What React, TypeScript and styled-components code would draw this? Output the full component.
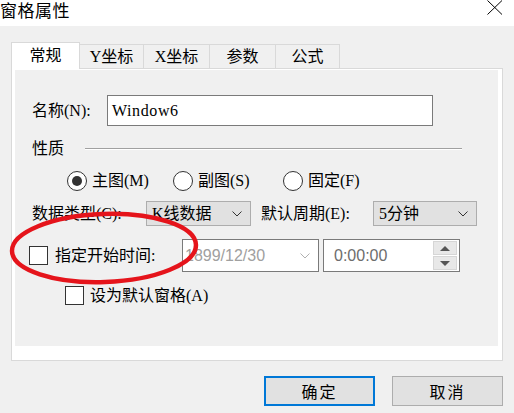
import React from 'react';
import styled, { createGlobalStyle } from 'styled-components';

const GlobalStyle = createGlobalStyle`
  html, body {
    margin: 0;
    padding: 0;
    background: #f0f0f0;
  }
  body {
    width: 514px;
    height: 413px;
    overflow: hidden;
    font-family: "Liberation Serif", "Noto Sans CJK SC", serif;
    font-size: 16px;
    color: #000;
  }
`;

const Dialog = styled.div`
  position: relative;
  width: 514px;
  height: 413px;
  background: #f0f0f0;
`;

const TitleBar = styled.div`
  height: 26px;
  background: #fff;
  display: flex;
  justify-content: space-between;
  align-items: flex-start;
`;

const Title = styled.div`
  font-family: "Noto Sans CJK SC", sans-serif;
  font-size: 17px;
  line-height: 20px;
  letter-spacing: 0.5px;
`;

const CloseBtn = styled.div`
  width: 27px;
  height: 16px;
  display: flex;
  justify-content: flex-start;
`;

const Body = styled.div`
  padding: 16px 11px 0 11px;
`;

const TabStrip = styled.div`
  display: flex;
  align-items: flex-end;
  height: 26px;
`;

const Tab = styled.div<{ $active?: boolean; $w: number }>`
  position: relative;
  z-index: ${(p) => (p.$active ? 1 : 0)};
  box-sizing: border-box;
  width: ${(p) => p.$w}px;
  height: ${(p) => (p.$active ? 27 : 24)}px;
  margin-bottom: ${(p) => (p.$active ? -1 : 0)}px;
  margin-left: ${(p) => (p.$active ? 0 : -1)}px;
  border: 1px solid #d9d9d9;
  border-bottom: none;
  background: ${(p) => (p.$active ? '#fff' : '#f0f0f0')};
  display: flex;
  align-items: center;
  justify-content: center;
  font-size: 16px;
  line-height: 20px;
  padding-top: ${(p) => (p.$active ? 0 : 1)}px;
`;

const Panel = styled.div`
  box-sizing: border-box;
  width: 492px;
  height: 293px;
  border: 1px solid #d9d9d9;
  background: #fff;
  padding: 1px 4px 14px 3px;
`;

const Page = styled.div`
  height: 100%;
  background: #f0f0f0;
  display: flex;
  flex-direction: column;
  padding-left: 17px;
`;

const Row = styled.div<{ $mt: number; $h: number; $ml?: number }>`
  display: flex;
  align-items: center;
  margin-top: ${(p) => p.$mt}px;
  margin-left: ${(p) => p.$ml ?? 0}px;
  height: ${(p) => p.$h}px;
  line-height: 18px;
  white-space: nowrap;
`;

const Label = styled.span<{ $w?: number; $ml?: number }>`
  display: inline-block;
  width: ${(p) => (p.$w ? `${p.$w}px` : 'auto')};
  margin-left: ${(p) => p.$ml ?? 0}px;
  flex-shrink: 0;
`;

const TextInput = styled.div`
  box-sizing: border-box;
  width: 326px;
  height: 31px;
  border: 1px solid #7a7a7a;
  background: #fff;
  padding: 0 4px;
  display: flex;
  align-items: center;
  font-family: "Liberation Serif", serif;
  font-size: 16px;
  letter-spacing: 0.6px;
`;

const Separator = styled.div`
  width: 377px;
  height: 1px;
  background: #a0a0a0;
  border-bottom: 1px solid #fff;
  margin-left: 21px;
`;

const RadioItem = styled.label<{ $w: number }>`
  display: flex;
  align-items: center;
  width: ${(p) => p.$w}px;
  gap: 5px;
`;

const RadioCircle = styled.span<{ $on?: boolean }>`
  box-sizing: border-box;
  width: 20px;
  height: 20px;
  border-radius: 50%;
  border: 1px solid #333;
  background: #fff;
  display: flex;
  align-items: center;
  justify-content: center;
  &::after {
    content: '';
    display: ${(p) => (p.$on ? 'block' : 'none')};
    width: 10px;
    height: 10px;
    border-radius: 50%;
    background: #333;
  }
`;

const Select = styled.div<{ $w: number }>`
  box-sizing: border-box;
  width: ${(p) => p.$w}px;
  height: 25px;
  border: 1px solid #adadad;
  background: #e1e1e1;
  display: flex;
  align-items: center;
  justify-content: space-between;
  padding: 0 8px 0 5px;
`;

const CheckBox = styled.span`
  box-sizing: border-box;
  display: inline-block;
  width: 19px;
  height: 19px;
  border: 1px solid #333;
  background: #fff;
  flex-shrink: 0;
`;

const FieldBox = styled.div<{ $w: number; $ml?: number }>`
  box-sizing: border-box;
  width: ${(p) => p.$w}px;
  height: 33px;
  margin-left: ${(p) => p.$ml ?? 0}px;
  border: 1px solid #7a7a7a;
  background: #fff;
  display: flex;
  align-items: center;
  justify-content: space-between;
  font-family: "Liberation Sans", sans-serif;
  font-size: 16px;
`;

const FieldText = styled.span<{ $color: string; $pl: number }>`
  color: ${(p) => p.$color};
  padding-left: ${(p) => p.$pl}px;
`;

const Spinner = styled.div`
  display: flex;
  flex-direction: column;
  gap: 1px;
  margin-right: 2px;
`;

const SpinBtn = styled.div`
  box-sizing: border-box;
  width: 24px;
  height: 14px;
  background: #e8e8e8;
  border: 1px solid #d6d6d6;
  display: flex;
  align-items: center;
  justify-content: center;
`;

const ButtonRow = styled.div`
  display: flex;
  justify-content: flex-end;
  gap: 17px;
  margin-top: 15px;
`;

const Button = styled.div<{ $primary?: boolean }>`
  box-sizing: border-box;
  width: 111px;
  height: 30px;
  background: #e1e1e1;
  border: ${(p) => (p.$primary ? '2px solid #0078d7' : '1px solid #adadad')};
  display: flex;
  align-items: center;
  justify-content: center;
  font-size: 16px;
  letter-spacing: 2px;
`;

const Marker = styled.svg`
  position: absolute;
  left: 8px;
  top: 210px;
  pointer-events: none;
`;

const Chevron: React.FC<{ color?: string }> = ({ color = '#333' }) => (
  <svg width="10" height="6" viewBox="0 0 10 6">
    <polyline points="0.5,0.5 5,5 9.5,0.5" fill="none" stroke={color} strokeWidth="1" />
  </svg>
);

const Triangle: React.FC<{ up?: boolean }> = ({ up }) => (
  <svg width="10" height="5" viewBox="0 0 10 5">
    <polygon points={up ? '0,5 10,5 5,0' : '0,0 10,0 5,5'} fill="#555" />
  </svg>
);

const tabs = [
  { label: '常规', w: 69, active: true },
  { label: 'Y坐标', w: 65 },
  { label: 'X坐标', w: 67 },
  { label: '参数', w: 67 },
  { label: '公式', w: 65 },
];

const App: React.FC = () => (
  <Dialog>
    <GlobalStyle />
    <TitleBar>
      <Title>窗格属性</Title>
      <CloseBtn>
        <svg width="16" height="15" viewBox="0 0 16 15">
          <line x1="0.5" y1="0.5" x2="15" y2="14.5" stroke="#000" strokeWidth="1" />
          <line x1="15" y1="0.5" x2="0.5" y2="14.5" stroke="#000" strokeWidth="1" />
        </svg>
      </CloseBtn>
    </TitleBar>
    <Body>
      <TabStrip>
        {tabs.map((t) => (
          <Tab key={t.label} $active={t.active} $w={t.w}>
            {t.label}
          </Tab>
        ))}
      </TabStrip>
      <Panel>
        <Page>
          <Row $mt={25} $h={31}>
            <Label $w={75}>名称(N):</Label>
            <TextInput>Window6</TextInput>
          </Row>
          <Row $mt={15} $h={16}>
            <Label>性质</Label>
            <Separator />
          </Row>
          <Row $mt={14} $h={20} $ml={35}>
            <RadioItem $w={106}>
              <RadioCircle $on />
              主图(M)
            </RadioItem>
            <RadioItem $w={110}>
              <RadioCircle />
              副图(S)
            </RadioItem>
            <RadioItem $w={100}>
              <RadioCircle />
              固定(F)
            </RadioItem>
          </Row>
          <Row $mt={10} $h={25}>
            <Label $w={114}>数据类型(C):</Label>
            <Select $w={105}>
              <span>K线数据</span>
              <Chevron />
            </Select>
            <Label $w={112} $ml={10}>默认周期(E):</Label>
            <Select $w={104}>
              <span>5分钟</span>
              <Chevron />
            </Select>
          </Row>
          <Row $mt={13} $h={33} $ml={-3}>
            <CheckBox />
            <Label $w={127} $ml={7}>指定开始时间:</Label>
            <FieldBox $w={137}>
              <FieldText $color="#a0a0a0" $pl={2}>1899/12/30</FieldText>
              <span style={{ marginRight: 8, display: 'flex' }}>
                <Chevron color="#b0b0b0" />
              </span>
            </FieldBox>
            <FieldBox $w={137} $ml={4}>
              <FieldText $color="#6d6d6d" $pl={10}>0:00:00</FieldText>
              <Spinner>
                <SpinBtn>
                  <Triangle up />
                </SpinBtn>
                <SpinBtn>
                  <Triangle />
                </SpinBtn>
              </Spinner>
            </FieldBox>
          </Row>
          <Row $mt={14} $h={19} $ml={33}>
            <CheckBox />
            <Label $ml={6}>设为默认窗格(A)</Label>
          </Row>
        </Page>
      </Panel>
      <ButtonRow>
        <Button $primary>确定</Button>
        <Button>取消</Button>
      </ButtonRow>
    </Body>
    <Marker width="194" height="78" viewBox="0 0 194 78">
      <ellipse
        cx="96"
        cy="38"
        rx="92"
        ry="34"
        fill="none"
        stroke="#e5141b"
        strokeWidth="4.5"
        transform="rotate(-2 96 38)"
      />
    </Marker>
  </Dialog>
);

export default App;
